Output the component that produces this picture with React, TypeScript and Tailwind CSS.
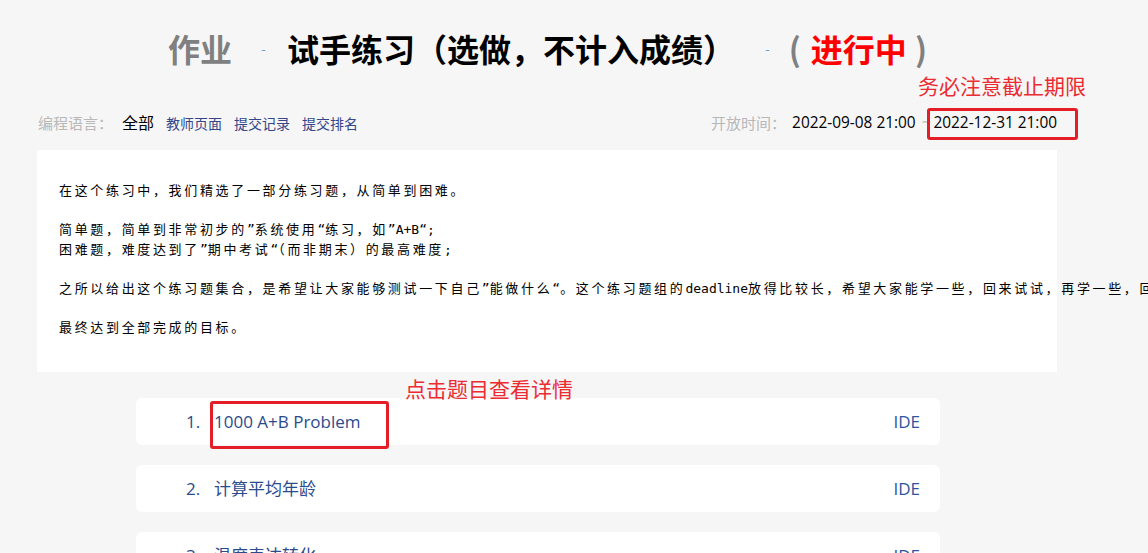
import React from "react";

const problems = [
  { no: 1, title: "1000 A+B Problem" },
  { no: 2, title: "计算平均年龄" },
  { no: 3, title: "温度表达转化" },
];

// half-width runs (latin, quotes, ;) keep normal spacing, CJK cells get spread out
function MonoLine({ text }: { text: string }) {
  const parts = text.split(/([A-Za-z+;\u201c\u201d]+)/);
  return (
    <div className="h-[19.6px]">
      {parts.map((p, i) =>
        /^[A-Za-z+;\u201c\u201d]+$/.test(p) ? (
          <span key={i} className="tracking-normal">
            {p}
          </span>
        ) : (
          <span key={i} className="tracking-[2.66px]">
            {p}
          </span>
        )
      )}
    </div>
  );
}

const intro = [
  "在这个练习中，我们精选了一部分练习题，从简单到困难。",
  "",
  "简单题，简单到非常初步的\u201d系统使用\u201c练习，如\u201dA+B\u201c;",
  "困难题，难度达到了\u201d期中考试\u201c（而非期末）的最高难度;",
  "",
  "之所以给出这个练习题集合，是希望让大家能够测试一下自己\u201d能做什么\u201c。这个练习题组的deadline放得比较长，希望大家能学一些，回来试试，再学一些，回来试试，",
  "",
  "最终达到全部完成的目标。",
];

export default function App() {
  return (
    <div className="relative h-[553px] w-full overflow-hidden bg-[#f6f6f6] font-['Open_Sans','Noto_Sans_CJK_SC',sans-serif]">
      <div className="ml-[37px] w-[1020px]">
        <h1 className="flex h-[96px] items-center pl-[131px] text-[32px] font-bold font-['Noto_Sans_CJK_SC',sans-serif]">
          <span className="text-[#808080]">作业</span>
          <span className="ml-[29px] text-[14px] font-normal text-[#6fa3d6]">-</span>
          <span className="ml-[21px] text-black">试手练习（选做，不计入成绩）</span>
          <span className="ml-[30px] text-[14px] font-normal text-[#6fa3d6]">-</span>
          <span className="ml-[19px] text-[#808080]">(</span>
          <span className="ml-[10px] text-[#ff0000]">进行中</span>
          <span className="ml-[8px] text-[#808080]">)</span>
        </h1>

        <div className="flex h-[54px] items-center justify-between pl-px">
          <div className="flex items-center">
            <span className="text-[15px] text-[#b8b8b8]">编程语言：</span>
            <span className="ml-[9px] text-[16px] text-black">全部</span>
            <div className="ml-3 flex gap-3 text-[14px] text-[#34468a]">
              <span>教师页面</span>
              <span>提交记录</span>
              <span>提交排名</span>
            </div>
          </div>
          <div className="flex items-center text-[15.4px]">
            <span className="text-[15px] text-[#b8b8b8]">开放时间：</span>
            <span className="ml-[6px] text-black">2022-09-08 21:00</span>
            <span className="ml-[6px] text-[#b8b8b8]">~</span>
            <span className="ml-[3px] text-black">2022-12-31 21:00</span>
          </div>
        </div>

        <div className="whitespace-pre bg-white pb-[34px] pl-[22px] pt-[31px] text-[13px] leading-[19.6px] text-black font-['DejaVu_Sans_Mono','Noto_Sans_CJK_SC',monospace]">
          {intro.map((line, i) => (
            <MonoLine key={i} text={line} />
          ))}
        </div>

        <ul className="ml-[99px] mt-[26px] flex w-[804px] flex-col gap-5">
          {problems.map((p) => (
            <li
              key={p.no}
              className="flex h-[47px] items-center justify-between rounded-md bg-white pl-[50px] pr-[20px] text-[17px] text-[#2b4b8d]"
            >
              <div className="flex items-center">
                <span className="w-[28px]">{p.no}.</span>
                <span>{p.title}</span>
              </div>
              <span className="text-[#2d55a0]">IDE</span>
            </li>
          ))}
        </ul>
      </div>

      {/* annotations drawn over the screenshot */}
      <div className="absolute left-[918px] top-[70px] text-[21px] leading-[30px] text-[#ec2b33] font-['Noto_Sans_CJK_SC',sans-serif]">
        务必注意截止期限
      </div>
      <div className="absolute left-[927px] top-[108px] h-[32px] w-[151px] rounded-[3px] border-[3px] border-[#e41e26]" />
      <div className="absolute left-[405px] top-[373px] text-[21px] leading-[30px] text-[#ec2b33] font-['Noto_Sans_CJK_SC',sans-serif]">
        点击题目查看详情
      </div>
      <div className="absolute left-[210px] top-[401px] h-[48px] w-[179px] rounded-[3px] border-[3px] border-[#e41e26]" />
    </div>
  );
}
